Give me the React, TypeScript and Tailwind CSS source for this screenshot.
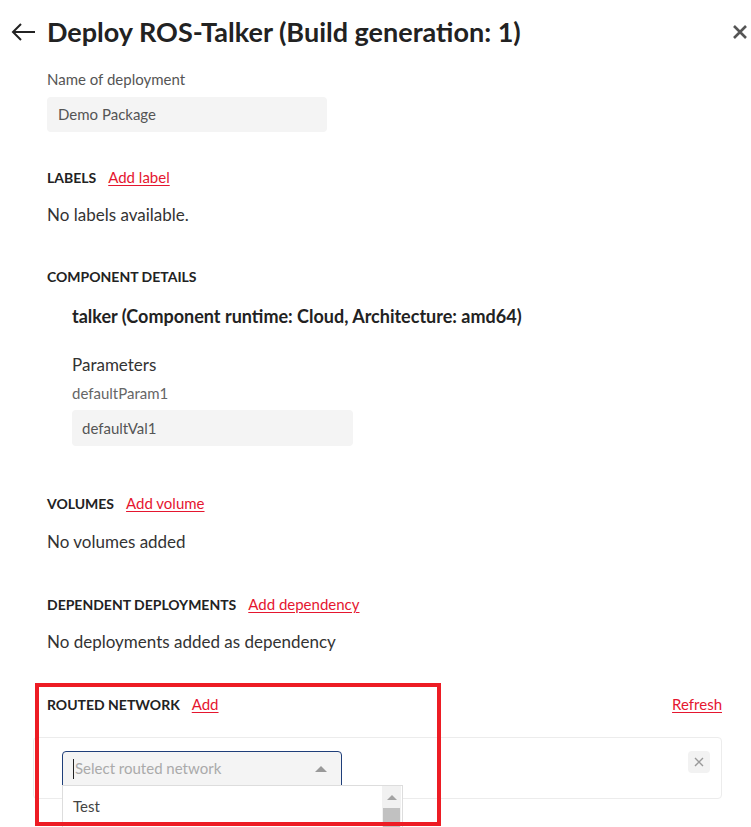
import React from "react";

const font = { fontFamily: "Lato, 'Open Sans', sans-serif" };

const SectionHeader = ({ title, action }: { title: string; action: string }) => (
  <div className="flex items-baseline gap-3 h-5 leading-5">
    <span className="text-[14px] font-bold uppercase text-[#222]">{title}</span>
    <a className="text-[15px] text-[#e5162f] underline underline-offset-2 cursor-pointer">{action}</a>
  </div>
);

export default function App() {
  return (
    <div className="w-[751px] h-[827px] bg-white relative overflow-hidden text-[#333]" style={font}>
      {/* header */}
      <div className="flex items-center h-[64px] pl-[10px] pr-[2px]">
        <svg width="26" height="20" viewBox="0 0 26 20" className="mr-[11px]">
          <path d="M25 10H3M11 2L3 10l8 8" stroke="#222" strokeWidth="2" fill="none" />
        </svg>
        <h1 className="text-[27px] font-bold text-[#222] leading-8">
          Deploy ROS-Talker (Build generation: 1)
        </h1>
        <svg width="16" height="16" viewBox="0 0 16 16" className="ml-auto mr-[1px]">
          <path d="M2 2l12 12M14 2L2 14" stroke="#555" strokeWidth="2.6" />
        </svg>
      </div>

      <div className="pl-[47px] pr-[29px]">
        <div className="text-[15px] leading-5 text-[#555] mt-[5px]">Name of deployment</div>
        <div className="w-[280px] h-[35px] mt-[8px] rounded bg-[#f4f4f4] flex items-center px-[11px] text-[15px] text-[#555]">
          Demo Package
        </div>

        <div className="mt-[35px]">
          <SectionHeader title="Labels" action="Add label" />
        </div>
        <div className="mt-[18px] text-[17px] leading-5">No labels available.</div>

        <div className="mt-[42px] text-[14px] leading-5 font-bold text-[#222]">COMPONENT DETAILS</div>
        <div className="pl-[25px]">
          <div className="mt-[19px] text-[18px] leading-5 font-bold text-[#222]">
            talker (Component runtime: Cloud, Architecture: amd64)
          </div>
          <div className="mt-[29px] text-[17px] leading-5">Parameters</div>
          <div className="mt-[8px] text-[15px] leading-5 text-[#666]">defaultParam1</div>
          <div className="w-[281px] h-[36px] mt-[7px] rounded bg-[#f4f4f4] flex items-center px-[10px] text-[15px] text-[#555]">
            defaultVal1
          </div>
        </div>

        <div className="mt-[47px]">
          <SectionHeader title="Volumes" action="Add volume" />
        </div>
        <div className="mt-[19px] text-[17px] leading-5">No volumes added</div>

        <div className="mt-[42px]">
          <SectionHeader title="Dependent deployments" action="Add dependency" />
        </div>
        <div className="mt-[18px] text-[17px] leading-5">No deployments added as dependency</div>

        <div className="mt-[42px] flex items-baseline h-5 leading-5">
          <SectionHeader title="Routed network" action="Add" />
          <a className="ml-auto text-[15px] text-[#e5162f] underline underline-offset-2">Refresh</a>
        </div>

        <div className="mt-[23px] -ml-[14px] border border-[#ececec] rounded h-[62px] flex items-start pt-[13px] pl-[28px] pr-[11px]">
          <div className="relative">
            <div className="w-[280px] h-[35px] bg-[#f4f4f4] border border-[#1f3f7a] rounded-t-[4px] flex items-center pl-[10px] pr-[14px]">
              <span className="w-px h-[20px] bg-[#222] mr-[1px]" />
              <span className="text-[15px] text-[#aaa]">Select routed network</span>
              <span className="ml-auto w-0 h-0 border-l-[6px] border-r-[6px] border-b-[6px] border-l-transparent border-r-transparent border-b-[#999]" />
            </div>
            <div className="absolute left-0 top-[34px] w-[341px] h-[60px] bg-white border border-[#ddd] flex">
              <div className="flex-1 pl-[10px] pt-[10px] text-[15px] leading-5 text-[#444]">Test</div>
              <div className="w-[19px] bg-[#f1f1f1] flex flex-col items-center mr-px">
                <span className="mt-[9px] w-0 h-0 border-l-[5px] border-r-[5px] border-b-[5px] border-l-transparent border-r-transparent border-b-[#a3a3a3]" />
                <span className="mt-[8px] w-[17px] flex-1 bg-[#c1c1c1]" />
              </div>
            </div>
          </div>
          <button className="ml-auto w-[22px] h-[22px] rounded bg-[#f2f2f2] flex items-center justify-center">
            <svg width="10" height="10" viewBox="0 0 10 10">
              <path d="M1 1l8 8M9 1L1 9" stroke="#999" strokeWidth="1.4" />
            </svg>
          </button>
        </div>
      </div>

      {/* annotation box */}
      <div className="absolute left-[35px] top-[683px] w-[406px] h-[143px] border-4 border-[#ed1c24] pointer-events-none" />
    </div>
  );
}
